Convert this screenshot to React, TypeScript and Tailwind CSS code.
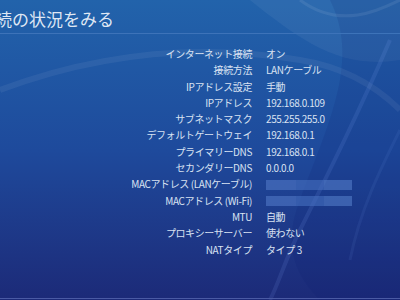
const rows: [string, string][] = [
  ["インターネット接続", "オン"],
  ["接続方法", "LANケーブル"],
  ["IPアドレス設定", "手動"],
  ["IPアドレス", "192.168.0.109"],
  ["サブネットマスク", "255.255.255.0"],
  ["デフォルトゲートウェイ", "192.168.0.1"],
  ["プライマリーDNS", "192.168.0.1"],
  ["セカンダリーDNS", "0.0.0.0"],
  ["MACアドレス (LANケーブル)", ""],
  ["MACアドレス (Wi-Fi)", ""],
  ["MTU", "自動"],
  ["プロキシーサーバー", "使わない"],
  ["NATタイプ", "タイプ 3"],
];

function Waves() {
  return (
    <svg
      className="absolute inset-0 h-full w-full"
      viewBox="0 0 400 300"
      preserveAspectRatio="none"
    >
      <path
        d="M250 0 C300 40 340 70 400 60 L400 0 Z"
        fill="#ffffff"
        fillOpacity="0.05"
      />
      <path
        d="M330 0 C360 60 330 120 300 200 C280 250 300 280 320 300 L400 300 L400 0 Z"
        fill="#0a1a6a"
        fillOpacity="0.12"
      />
      <path
        d="M0 90 C80 60 180 40 300 60 C350 68 380 90 400 110"
        stroke="#ffffff"
        strokeOpacity="0.06"
        strokeWidth="6"
        fill="none"
      />
      <path
        d="M300 0 C340 30 380 10 400 0"
        stroke="#ffffff"
        strokeOpacity="0.08"
        strokeWidth="3"
        fill="none"
      />
      <path
        d="M390 40 C360 110 330 170 300 230 C285 260 280 280 270 300"
        stroke="#8fb0ff"
        strokeOpacity="0.12"
        strokeWidth="4"
        fill="none"
      />
      <path
        d="M400 130 C380 170 360 210 350 260"
        stroke="#8fb0ff"
        strokeOpacity="0.08"
        strokeWidth="3"
        fill="none"
      />
    </svg>
  );
}

export default function App() {
  return (
    <div
      className="relative h-[300px] w-[400px] overflow-hidden bg-gradient-to-b from-[#2263ab] via-[#1e4a9c] to-[#1c2a78] text-[#d9e2f2]"
      style={{ fontFamily: '"Noto Sans CJK JP", "Noto Sans", sans-serif' }}
    >
      <Waves />
      <div className="relative flex h-full flex-col">
        <div className="h-[34px] overflow-hidden border-b border-[#3d73b9]">
          <h1 className="ml-[-22px] whitespace-nowrap pt-[7px] text-[17px] leading-[24px] text-[#dfe7f4]">
            接続の状況をみる
          </h1>
        </div>
        <div className="flex flex-col pt-[12px] text-[10px] leading-[16.3px] tracking-[-0.4px]">
          {rows.map(([label, value]) => (
            <div key={label} className="flex h-[16.3px] items-center">
              <div className="w-[252px] whitespace-nowrap text-right">{label}</div>
              <div className="ml-[14px] whitespace-nowrap">
                {value ? (
                  value
                ) : (
                  <div className="flex h-[10px] w-[86px] opacity-60">
                    <div className="w-[30px] bg-[#5078c6]" />
                    <div className="w-[28px] bg-[#4670c0]" />
                    <div className="w-[28px] bg-[#527cc8]" />
                  </div>
                )}
              </div>
            </div>
          ))}
        </div>
        <div className="mt-auto h-[2px] border-t border-[#4a5aa4]" />
      </div>
    </div>
  );
}
